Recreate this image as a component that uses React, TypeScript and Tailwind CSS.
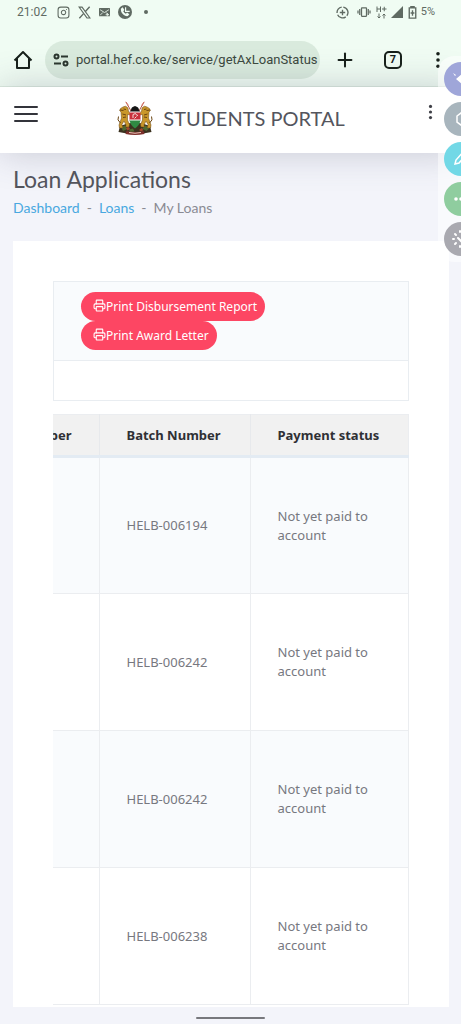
import React from 'react';
import { Instagram, Plus, Printer } from 'lucide-react';

const PAYMENTS = [
  { batch: 'HELB-006194', status: 'Not yet paid to account' },
  { batch: 'HELB-006242', status: 'Not yet paid to account' },
  { batch: 'HELB-006242', status: 'Not yet paid to account' },
  { batch: 'HELB-006238', status: 'Not yet paid to account' },
];

const Dots = ({ className }: { className: string }) => (
  <svg viewBox="0 0 6 20" className={className} fill="currentColor" aria-hidden="true">
    <circle cx="3" cy="3" r="2" />
    <circle cx="3" cy="10" r="2" />
    <circle cx="3" cy="17" r="2" />
  </svg>
);

const StatusBar = () => (
  <div className="flex h-6 items-center justify-between pr-[26px] pl-[17px] text-xs text-[#5f6a62]">
    <div className="flex items-center">
      <span className="w-10">21:02</span>
      <Instagram className="h-[13px] w-[13px]" />
      <svg viewBox="0 0 24 24" className="ml-2 h-[13px] w-[13px]" fill="none" stroke="currentColor" strokeWidth="2">
        <path d="M2 2h5.500l14.500 20h-5.500z" />
        <path d="M21.500 1.500 13.300 10.700M10.200 14 2.500 22.500" strokeWidth="2.500" />
      </svg>
      <svg viewBox="0 0 20 16" className="ml-2 h-[9px] w-[11px]">
        <rect width="20" height="15" rx="1" fill="currentColor" />
        <path d="m2 3 8 5 8-5M2 13l5-5M13 8l5 5" stroke="#f0fcf3" strokeWidth="1.500" fill="none" />
        <path d="M12 12h6m-3-3v6" stroke="#f0fcf3" strokeWidth="1.500" />
      </svg>
      <svg viewBox="0 0 24 24" className="ml-2 h-[14px] w-[14px]">
        <circle cx="12" cy="12" r="12" fill="currentColor" />
        <path d="M5 6.500 8 4l3 4.500-2 2c1 2 2.500 3.500 4.500 4.500l2-2 4 3-2.500 3C11 20 4 13 5 6.500Z" fill="#f0fcf3" />
        <path d="M13 4v7h7" stroke="#f0fcf3" strokeWidth="2" fill="none" />
      </svg>
      <span className="ml-3 h-1 w-1 rounded-full bg-[#5f6a62]" />
    </div>
    <div className="flex items-center">
      <svg viewBox="0 0 24 24" className="h-[13px] w-[13px]" fill="none" stroke="currentColor" strokeWidth="2.500">
        <path d="M13.500 2A10 10 0 0 1 20 18M18 20A10 10 0 0 1 3 16M2 13A10 10 0 0 1 10.500 2" />
        <path d="M12 7v10M7 12h10" />
      </svg>
      <svg viewBox="0 0 26 20" className="ml-2 h-[10px] w-[14px]" fill="none" stroke="currentColor" strokeWidth="2.500">
        <rect x="8" y="1.500" width="10" height="17" rx="1" />
        <path d="M4.500 4v12M1 7v6M21.500 4v12M25 7v6" />
      </svg>
      <svg viewBox="0 0 22 26" className="ml-[5px] h-[13px] w-[11px]" fill="none" stroke="currentColor" strokeWidth="2">
        <path d="M2 1v11M9 1v11M2 6h7M12 6h9M16.500 1.500v9" />
        <path d="M6 15v9M3 21l3 3 3-3M16 25v-9M13 19l3-3 3 3" />
      </svg>
      <svg viewBox="0 0 12 12" className="ml-1 h-3 w-3" fill="currentColor">
        <path d="M12 0v12H0z" />
      </svg>
      <svg viewBox="0 0 16 24" className="mr-1 ml-[5px] h-[13px] w-[9px]" fill="none" stroke="currentColor" strokeWidth="2.500">
        <path d="M5 3V1h6v2M2 3.500h12v19H2z" />
        <path d="M8 8v10M4.500 13h7" />
      </svg>
      <span className="text-[11px]">5%</span>
    </div>
  </div>
);

const BrowserBar = () => (
  <div className="flex h-[63px] items-center border-b border-[#dcebdf] pt-[13px] pr-5 pb-[3px] pl-3 text-[#17201a]">
    <a href="#home" aria-label="Home page" className="mr-[11px]">
      <svg viewBox="0 0 22 22" className="h-[22px] w-[22px]" fill="none" stroke="currentColor" strokeWidth="2" strokeLinejoin="round">
        <path d="M2.500 11.500 11 3l8.500 8.500M5 9.500V19h12V9.500" />
      </svg>
    </a>
    <div className="flex h-[38px] min-w-0 flex-1 items-center overflow-hidden rounded-full bg-[#d9eadd] pl-2">
      <svg viewBox="0 0 16 14" className="h-[14px] w-4 shrink-0" fill="none" stroke="#2b352e" strokeWidth="2">
        <circle cx="3.500" cy="3.500" r="2" />
        <path d="M8 3.500h7M1 10.500h7" />
        <circle cx="12.500" cy="10.500" r="2" />
      </svg>
      <input
        type="text"
        aria-label="Address"
        readOnly
        value="portal.hef.co.ke/service/getAxLoanStatus"
        className="ml-[7px] min-w-0 flex-1 bg-transparent text-[13px] text-[#3c483f] outline-none"
      />
    </div>
    <button type="button" aria-label="New tab" className="ml-3.5">
      <Plus className="h-[22px] w-[22px]" strokeWidth={2.2} />
    </button>
    <button
      type="button"
      aria-label="Tabs"
      className="ml-7 flex h-[18px] w-[18px] items-center justify-center rounded-[5px] border-2 border-[#17201a] text-[11px] font-bold"
    >
      7
    </button>
    <button type="button" aria-label="Browser menu" className="ml-[33px]">
      <Dots className="h-[18px] w-[6px]" />
    </button>
  </div>
);

const Lion = () => (
  <g fill="#c9972b" stroke="#6b4512" strokeWidth="1">
    <path d="M12 12q6-4 10 2l1 7 6 3-1 4-7-1v11l4 9-1 5h-7l1-4-4-8-4 7 2 7H5l-1-6 5-14-1-12-3-3q1-5 7-7Z" />
    <path d="M7 44q-8-6-4-13M6 18l7 1M13 16l5 1M11 26l7 2M12 33l6-1" fill="none" strokeWidth="2" />
  </g>
);

const CoatOfArms = () => (
  <svg viewBox="0 0 72 68" className="h-[34px] w-9" role="img" aria-label="Coat of arms">
    <path d="M18 2 48 56M54 2 24 56" stroke="#b3564a" strokeWidth="2" />
    <path d="m16 0 7 7-1 4zM56 0l-7 7 1 4z" fill="#d77a6c" />
    <path d="M6 50Q36 36 66 50l3 12q-33 8-66 0Z" fill="#3c3220" />
    <path d="M8 52l8-3 5 7-9 4zM50 55l7-6 8 5-6 6zM24 57l8-2 3 6-9 1z" fill="#4f6b32" />
    <path d="M18 54l5-3 3 5-5 3zM44 58l5-4 4 4-5 3z" fill="#a5472d" />
    <Lion />
    <g transform="matrix(-1 0 0 1 72 0)">
      <Lion />
    </g>
    {/* shield */}
    <path d="M28 18q0-6 8-8 8 2 8 8l3 5H25z" fill="#151515" />
    <path d="M25 22h22v17H25z" fill="#c9303c" />
    <path d="M25 38h22q-2 11-11 17-9-6-11-17Z" fill="#2f8a43" />
    <path d="M25 22h22M25 38h22" stroke="#fff" strokeWidth="2" />
    <path d="M32 34V27l5-2 2 3 3 1M35 35l4-4" stroke="#f4dcd9" strokeWidth="2" fill="none" />
    <path d="M19 60q17 4 34 0l2 6q-19 4-38 0Z" fill="#7c2e2a" />
    <path d="M24 63q12 3 24 0" stroke="#e8c9bd" strokeWidth="2" fill="none" />
  </svg>
);

const PortalHeader = () => (
  <header className="relative flex h-[66px] items-center justify-between bg-white pr-7 pb-2 pl-3.5 text-[#3f4047] shadow-[0_0_36px_rgba(82,85,110,0.28)]">
    <button type="button" aria-label="Open menu" className="mb-1 text-[#33343b]">
      <svg viewBox="0 0 24 18" className="h-[18px] w-6" stroke="currentColor" strokeWidth="2">
        <path d="M1 2h22M1 9h22M1 16h22" strokeLinecap="round" />
      </svg>
    </button>
    <a href="#portal" className="flex items-center gap-2.5 pt-1 pr-1">
      <CoatOfArms />
      <span className="text-xl whitespace-nowrap text-[#54555d]">STUDENTS PORTAL</span>
    </a>
    <button type="button" aria-label="More options" className="mb-2">
      <Dots className="h-4 w-[5px]" />
    </button>
  </header>
);

const TOOL = 'h-[34px] w-[34px] rounded-full';

const FloatingTools = () => (
  <div className="absolute top-[56px] right-0 w-[23px] overflow-hidden rounded-l-2xl bg-white/50 py-[6px] pl-[6px]">
    <div className="flex w-[34px] flex-col gap-[6px] text-white">
      <button type="button" aria-label="Announce" className={`${TOOL} bg-[#9fa6d9]`}>
        <svg viewBox="0 0 34 34" fill="currentColor">
          <path d="m12 17 7-6v12zM9 11l3 2-1 1z" />
        </svg>
      </button>
      <button type="button" aria-label="Shape" className={`${TOOL} bg-[#a8b5bd]`}>
        <svg viewBox="0 0 34 34" fill="none" stroke="currentColor" strokeWidth="1.500">
          <path d="m13 14 4-3 5 3v6l-5 3-4-3z" />
        </svg>
      </button>
      <button type="button" aria-label="Draw" className={`${TOOL} bg-[#72d8e6]`}>
        <svg viewBox="0 0 34 34" fill="none" stroke="currentColor" strokeWidth="1.500">
          <path d="m11 22 1-4 8-9 3 3-8 9z" />
        </svg>
      </button>
      <button type="button" aria-label="More tools" className={`${TOOL} bg-[#8fcd9f]`}>
        <svg viewBox="0 0 34 34" fill="currentColor">
          <circle cx="12" cy="17" r="1.800" />
          <circle cx="17" cy="17" r="1.800" />
          <circle cx="22" cy="17" r="1.800" />
        </svg>
      </button>
      <button type="button" aria-label="Pointer" className={`${TOOL} bg-[#a9a9b0]`}>
        <svg viewBox="0 0 34 34" fill="none" stroke="currentColor" strokeWidth="2" strokeLinecap="round">
          <path d="M9 17h1M11 12l1 1M11 22l1-1M16 9v1M16 25v-1" />
          <path d="m14 16 3 3 5-6" />
        </svg>
      </button>
    </div>
  </div>
);

const PrintButton = ({ children }: { children: string }) => (
  <button
    type="button"
    className="flex h-[29px] items-center rounded-full bg-[#fd4663] pr-2 pl-3 text-xs whitespace-nowrap text-white"
  >
    <Printer className="mb-0.5 h-[13px] w-[13px]" />
    {children}
  </button>
);

export default function App() {
  return (
    <div className="relative overflow-hidden bg-[#f3f4fa] font-['Noto_Sans',sans-serif]">
      <div className="bg-[#f0fcf3] font-['Roboto',sans-serif]">
        <StatusBar />
        <BrowserBar />
      </div>

      <div className="font-['Lato',sans-serif]">
        <PortalHeader />
        <div className="px-[13px] pt-3 pb-6">
          <h1 className="text-[23px] leading-7 text-[#54555d]">Loan Applications</h1>
          <nav aria-label="Breadcrumb" className="mt-[6px] flex gap-[7px] text-sm leading-[18px] text-[#8a8b93]">
            <a href="#dashboard" className="text-[#48a8e0]">Dashboard</a>
            <span>-</span>
            <a href="#loans" className="text-[#48a8e0]">Loans</a>
            <span>-</span>
            <span>My Loans</span>
          </nav>
        </div>
      </div>

      <main className="mr-3 ml-[13px] bg-white px-10 pt-10 pb-0.5">
        <table className="w-full border-collapse border border-[#e9edf1]">
          <tbody>
            <tr className="border-b border-[#e9edf1] bg-[#f9fbfd]">
              <td className="h-[79px] px-[27px]">
                <div className="flex flex-col items-start">
                  <PrintButton>Print Disbursement Report</PrintButton>
                  <PrintButton>Print Award Letter</PrintButton>
                </div>
              </td>
            </tr>
            <tr>
              <td className="h-10" />
            </tr>
          </tbody>
        </table>

        <table className="mt-[13px] w-full table-fixed border-collapse border-y border-r border-[#ebedf0] text-[13px] leading-[19px]">
          <thead>
            <tr className="h-[42px] border-b-3 border-[#e3ebf3] bg-[#f1f1f1] text-left text-[#2f3035]">
              <th scope="col" className="w-[46px] border-r border-r-[#e7e9ec] pr-[27px]">
                <div className="flex justify-end overflow-hidden">ber</div>
              </th>
              <th scope="col" className="w-[151px] border-r border-r-[#e7e9ec] pl-[27px]">Batch Number</th>
              <th scope="col" className="pl-[27px]">Payment status</th>
            </tr>
          </thead>
          <tbody className="text-[#77787f]">
            {PAYMENTS.map((payment, i) => (
              <tr key={i} className="h-[137px] border-b border-[#ebedf0] odd:bg-[#f9fbfd]">
                <td className="border-r border-[#ebedf0]" />
                <td className="border-r border-[#ebedf0] pl-[27px]">{payment.batch}</td>
                <td className="px-[27px]">{payment.status}</td>
              </tr>
            ))}
          </tbody>
        </table>
      </main>

      <div className="flex h-[18px] items-center justify-center pt-1">
        <span className="h-0.5 w-[69px] rounded-full bg-[#77787d]" />
      </div>

      <FloatingTools />
    </div>
  );
}
